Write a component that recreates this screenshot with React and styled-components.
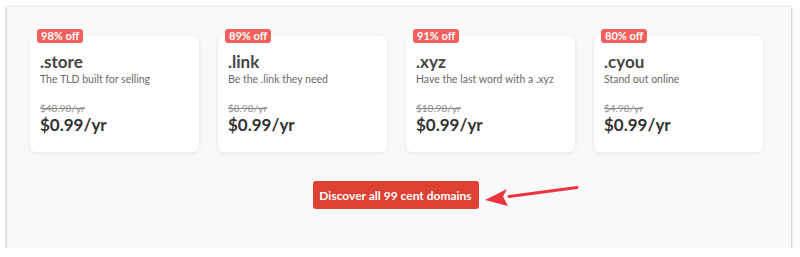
import React from 'react'
import styled, { createGlobalStyle } from 'styled-components'

const deals = [
  { off: '98% off', tld: '.store', tagline: 'The TLD built for selling', was: '$48.98/yr', price: '$0.99/yr' },
  { off: '89% off', tld: '.link', tagline: 'Be the .link they need', was: '$8.98/yr', price: '$0.99/yr' },
  { off: '91% off', tld: '.xyz', tagline: 'Have the last word with a .xyz', was: '$10.98/yr', price: '$0.99/yr' },
  { off: '80% off', tld: '.cyou', tagline: 'Stand out online', was: '$4.98/yr', price: '$0.99/yr' },
]

function App() {
  return (
    <>
      <GlobalStyle />
      <Panel>
        <CardRow>
          {deals.map((d) => (
            <Card key={d.tld}>
              <Badge>{d.off}</Badge>
              <Tld>{d.tld}</Tld>
              <Tagline>{d.tagline}</Tagline>
              <OldPrice>{d.was}</OldPrice>
              <Price>{d.price}</Price>
            </Card>
          ))}
        </CardRow>
        <Footer>
          <ButtonWrap>
            <Button>Discover all 99 cent domains</Button>
            <Arrow width="96" height="26" viewBox="0 0 96 26">
              <path d="M26 13.5 L94 4.5" stroke="#ec3340" strokeWidth="3" strokeLinecap="round" fill="none" />
              <path d="M2 17 L24 6 L20 13.5 L25 23 Z" fill="#ec3340" />
            </Arrow>
          </ButtonWrap>
        </Footer>
      </Panel>
    </>
  )
}

const GlobalStyle = createGlobalStyle`
  body {
    margin: 0;
    background: #ffffff;
    font-family: Lato, "Open Sans", sans-serif;
  }
`

const Panel = styled.div`
  margin: 7px 0 0 7px;
  width: 784px;
  height: 241px;
  box-sizing: border-box;
  background: #f9f9f9;
  box-shadow: 0 1px 2px 1px rgba(0, 0, 0, 0.22);
  padding: 29px 0 0 23px;
`

const CardRow = styled.div`
  display: grid;
  grid-template-columns: repeat(4, 169px);
  column-gap: 19px;
`

const Card = styled.div`
  position: relative;
  height: 116px;
  box-sizing: border-box;
  background: #ffffff;
  border-radius: 6px;
  box-shadow: 0 1px 4px rgba(0, 0, 0, 0.08);
  padding: 16px 10px 0 10px;
  color: #333333;
`

const Badge = styled.span`
  position: absolute;
  top: -7px;
  left: 7px;
  height: 14px;
  padding: 0 4px;
  border-radius: 3px;
  background: #f25f5c;
  color: #ffffff;
  font-size: 11px;
  font-weight: 700;
  line-height: 14px;
`

const Tld = styled.div`
  font-size: 17px;
  font-weight: 700;
  line-height: 20px;
  color: #454545;
`

const Tagline = styled.div`
  font-size: 10.5px;
  line-height: 14px;
  color: #6a6a6a;
`

const OldPrice = styled.div`
  margin-top: 15px;
  font-size: 10px;
  line-height: 14px;
  color: #8a8a8a;
  text-decoration: line-through;
`

const Price = styled.div`
  font-size: 17px;
  font-weight: 700;
  line-height: 20px;
  color: #333333;
`

const Footer = styled.div`
  display: flex;
  justify-content: center;
  padding: 29px 30px 0 0;
`

const ButtonWrap = styled.div`
  position: relative;
`

const Button = styled.button`
  display: block;
  width: 166px;
  height: 28px;
  border: none;
  border-radius: 3px;
  background: #dc4131;
  color: #ffffff;
  font-family: Lato, "Open Sans", sans-serif;
  font-size: 12px;
  font-weight: 700;
  cursor: pointer;
`

const Arrow = styled.svg`
  position: absolute;
  left: 170px;
  top: 2px;
`

export default App
